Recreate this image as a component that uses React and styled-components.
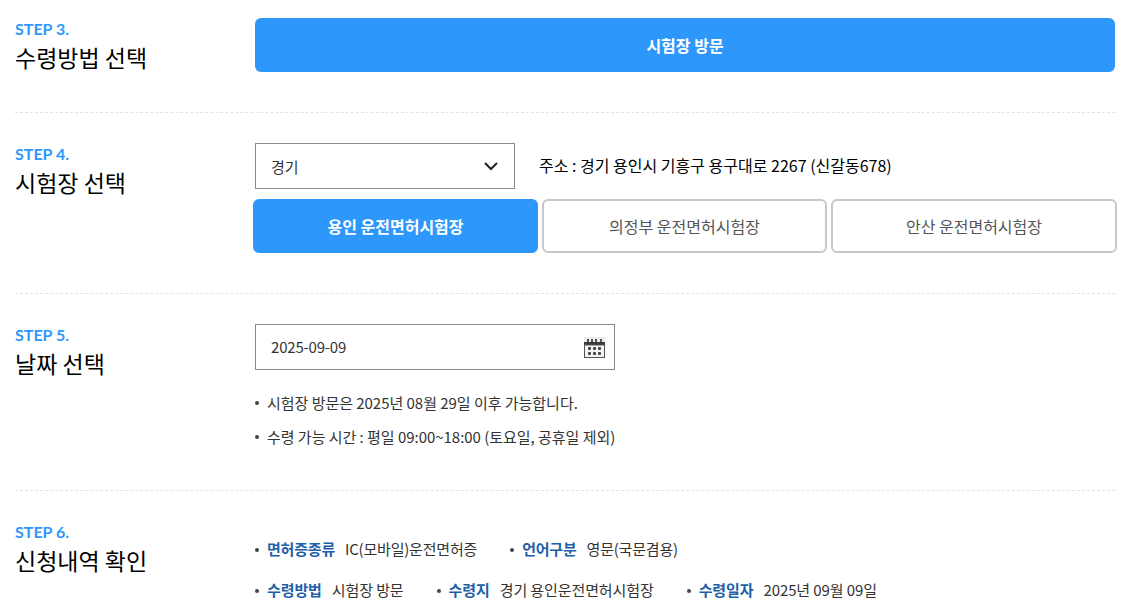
import React from "react";
import styled, { createGlobalStyle } from "styled-components";

const Global = createGlobalStyle`
    html, body { margin: 0; padding: 0; background: #fff; overflow: hidden; }
    body { font-family: "Noto Sans CJK KR", "Noto Sans", sans-serif; color: #222; }
`;

const Page = styled.div`
    width: 1135px;
    height: 613px;
    overflow: hidden;
    box-sizing: border-box;
    padding: 18px 20px 0 15px;
`;

const Section = styled.section`
    display: flex;
    height: ${(p) => p.$h}px;
    margin-bottom: ${(p) => p.$mb || 0}px;
    border-bottom: ${(p) => (p.$last ? "none" : "1px dashed #e3e3e3")};
`;

const Heading = styled.div`
    width: 240px;
    flex: none;
`;

const Step = styled.div`
    font-family: "Lato", "Noto Sans", sans-serif;
    font-size: 16px;
    font-weight: 700;
    line-height: 22px;
    color: #2e97fb;
`;

const Title = styled.h2`
    margin: 0;
    font-size: 23px;
    font-weight: 400;
    line-height: 34px;
    color: #000;
`;

const Body = styled.div`
    flex: 1;
    display: flex;
    flex-direction: column;
`;

const Primary = styled.div`
    height: 54px;
    border-radius: 6px;
    background: #2e97fb;
    color: #fff;
    font-size: 16px;
    font-weight: 700;
    display: flex;
    align-items: center;
    justify-content: center;
`;

const Row = styled.div`
    display: flex;
    align-items: center;
    gap: 24px;
`;

const Field = styled.div`
    width: ${(p) => p.$w}px;
    height: 46px;
    box-sizing: border-box;
    border: 1px solid #8a8a8a;
    padding: 0 ${(p) => p.$pr || 16}px 0 15px;
    display: flex;
    align-items: center;
    justify-content: space-between;
    font-size: 15px;
    color: #333;
`;

const DateText = styled.span`
    letter-spacing: -0.2px;
    margin-top: -2px;
`;

const Address = styled.div`
    font-size: 16px;
    color: #000;
    margin-top: -2px;
`;

const Tabs = styled.div`
    display: grid;
    grid-template-columns: 285px 285px 1fr;
    gap: 4px;
    margin: 10px -2px 0;
`;

const Tab = styled.div`
    height: 54px;
    box-sizing: border-box;
    border-radius: 6px;
    border: 2px solid ${(p) => (p.$on ? "#2e97fb" : "#c8c8c8")};
    background: ${(p) => (p.$on ? "#2e97fb" : "#fff")};
    color: ${(p) => (p.$on ? "#fff" : "#555")};
    font-size: 16px;
    font-weight: ${(p) => (p.$on ? 700 : 400)};
    display: flex;
    align-items: center;
    justify-content: center;
`;

const Notes = styled.ul`
    list-style: none;
    margin: ${(p) => p.$mt}px 0 0;
    padding: 0;
`;

const Line = styled.li`
    display: flex;
    height: ${(p) => p.$h || 34}px;
    align-items: center;
    font-size: 15px;
    letter-spacing: ${(p) => p.$ls || 0}px;
    color: #333;
`;

const Item = styled.span`
    display: inline-flex;
    align-items: center;
    margin-right: 33px;
    &::before {
        content: "";
        width: 4px;
        height: 4px;
        border-radius: 50%;
        background: #444;
        margin: 2px 8px 0 0;
    }
`;

const Label = styled.b`
    color: #1e5fa8;
    font-weight: 700;
    margin-right: 10px;
`;

const Chevron = () => (
    <svg width="14" height="9" viewBox="0 0 14 9" fill="none" stroke="#222" strokeWidth="2">
        <path d="M1 1l6 6 6-6" />
    </svg>
);

const Calendar = () => (
    <svg width="21" height="22" viewBox="0 0 21 22">
        <rect x="0" y="1" width="21" height="5" fill="#ececec" />
        {[4, 8, 12, 17].map((x) => (
            <rect key={x} x={x - 1} y="3" width="2" height="3" fill="#555" />
        ))}
        <rect x="0" y="6" width="21" height="3" fill="#3a3a3a" />
        <rect x="0.5" y="9" width="20" height="12.5" fill="#f4f4f4" stroke="#555" />
        {[11, 16].map((y) =>
            [4, 9, 14].map((x) => (
                <rect key={`${x}-${y}`} x={x} y={y} width="3" height="3" rx="1" fill="#444" />
            ))
        )}
    </svg>
);

const App = () => (
    <Page>
        <Global />
        <Section $h={94} $mb={30}>
            <Heading>
                <Step>STEP 3.</Step>
                <Title>수령방법 선택</Title>
            </Heading>
            <Body>
                <Primary>시험장 방문</Primary>
            </Body>
        </Section>
        <Section $h={150} $mb={30}>
            <Heading>
                <Step>STEP 4.</Step>
                <Title>시험장 선택</Title>
            </Heading>
            <Body>
                <Row>
                    <Field $w={260}>경기<Chevron /></Field>
                    <Address>주소 : 경기 용인시 기흥구 용구대로 2267 (신갈동678)</Address>
                </Row>
                <Tabs>
                    <Tab $on>용인 운전면허시험장</Tab>
                    <Tab>의정부 운전면허시험장</Tab>
                    <Tab>안산 운전면허시험장</Tab>
                </Tabs>
            </Body>
        </Section>
        <Section $h={166} $mb={30}>
            <Heading>
                <Step>STEP 5.</Step>
                <Title>날짜 선택</Title>
            </Heading>
            <Body>
                <Field $w={360} $pr={9}><DateText>2025-09-09</DateText><Calendar /></Field>
                <Notes $mt={15}>
                    <Line $ls={-0.03}><Item>시험장 방문은 2025년 08월 29일 이후 가능합니다.</Item></Line>
                    <Line $ls={-0.03}><Item>수령 가능 시간 : 평일 09:00~18:00 (토요일, 공휴일 제외)</Item></Line>
                </Notes>
            </Body>
        </Section>
        <Section $h={100} $last>
            <Heading>
                <Step>STEP 6.</Step>
                <Title>신청내역 확인</Title>
            </Heading>
            <Body>
                <Notes $mt={7}>
                    <Line $h={41} $ls={-0.2}>
                        <Item><Label>면허증종류</Label>IC(모바일)운전면허증</Item>
                        <Item><Label>언어구분</Label>영문(국문겸용)</Item>
                    </Line>
                    <Line $h={41} $ls={-0.1}>
                        <Item><Label>수령방법</Label>시험장 방문</Item>
                        <Item><Label>수령지</Label>경기 용인운전면허시험장</Item>
                        <Item><Label>수령일자</Label>2025년 09월 09일</Item>
                    </Line>
                </Notes>
            </Body>
        </Section>
    </Page>
);

export default App;
